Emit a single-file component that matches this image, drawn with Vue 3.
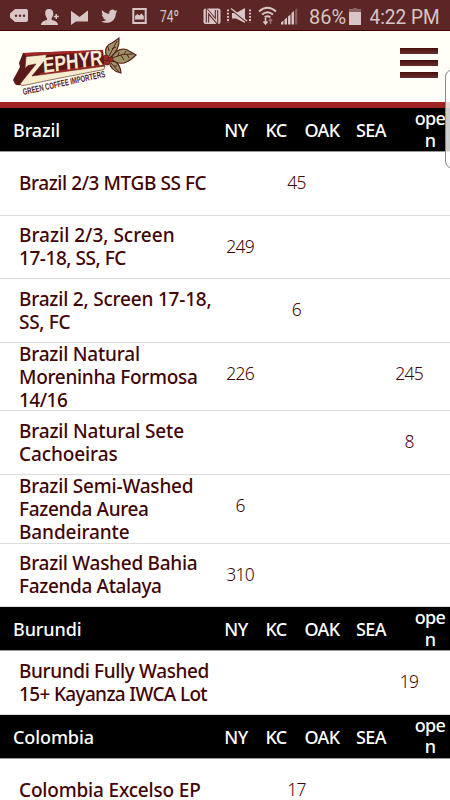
<template>
  <div class="screen">
    <div class="status">
      <!-- notification icons -->
      <svg class="status-icons" viewBox="0 0 225 30" width="225" height="30" fill="#d8c5c5">
        <path d="M15 9h11q2 0 2 2v9q0 2-2 2H15l-5-4.500v-4z" />
        <g fill="#5c2626">
          <circle cx="16" cy="15.700" r="1.200" /><circle cx="20" cy="15.700" r="1.200" /><circle cx="24" cy="15.700" r="1.200" />
        </g>
        <path d="M49 9c3 0 4.300 2 4.300 4.600 0 2-.8 3.400-1.700 4.600v1.600c3 1 6.400 2 6.400 5.200H41c0-3.200 3.200-4.200 6-5.200v-1.600c-1-1.200-1.800-2.600-1.800-4.600C45.200 11 46 9 49 9z" />
        <path d="M55.500 14v1.700h-1.700v1.500h1.700V19H57v-1.800h1.800v-1.500H57V14z" />
        <path d="M71 10l8.500 6L88 10v11.500H76L71 25z" />
        <path d="M71 10l8.500 6.200L88 9.500" fill="none" stroke="#5c2626" stroke-width="1.300" />
        <path d="M117.500 11.200c-.6.300-1.200.5-1.900.5.700-.4 1.200-1 1.400-1.800-.7.400-1.400.6-2.100.8a3.300 3.300 0 0 0-5.700 3c-2.800-.1-5.200-1.400-6.900-3.500-.9 1.500-.4 3.500 1 4.500-.5 0-1-.2-1.500-.4 0 1.600 1.200 3 2.700 3.300-.5.100-1 .1-1.500 0 .4 1.300 1.700 2.300 3.100 2.300a6.700 6.700 0 0 1-4.900 1.400c5.900 3.700 14.700.7 14.700-8.400.6-.4 1.200-1 1.600-1.700z" />
        <path d="M133.300 9h12.400v14h-12.400z" fill="none" stroke="#d8c5c5" stroke-width="2" />
        <path d="M135 19.500V16l2.500-2 1.800 1.500 2-2 2.500 2.500v3.500z" />
        <text x="160" y="22" textLength="19" lengthAdjust="spacingAndGlyphs">74º</text>
        <rect x="203.500" y="8.500" width="17" height="15.500" rx="2" />
        <path d="M207.500 22.500V11l9 10.500V10" fill="none" stroke="#5c2626" stroke-width="3.400" />
        <path d="M207.500 23V10.500l9 11V9" fill="none" stroke="#d8c5c5" stroke-width="1.300" />
      </svg>
      <!-- radio, battery and clock -->
      <svg class="status-icons" viewBox="225 0 225 30" width="225" height="30" fill="#d8c5c5">
        <path d="M232 13h4l9-5v15l-9-4.500h-4z" />
        <path d="M231 9.500l15 12" fill="none" stroke="#5c2626" stroke-width="1.600" />
        <path d="M231 8.500l16 12.500" fill="none" stroke="#d8c5c5" stroke-width="1.400" />
        <path d="M228 9.500v13M250 9.500v13" fill="none" stroke="#d8c5c5" stroke-width="2" stroke-dasharray="1.800 1.400" />
        <g fill="none" stroke="#d8c5c5" stroke-width="2">
          <path d="M259 11.500q8.500-7.500 17 0M262 14.500q5.500-4.500 11 0M264.700 17.200q2.800-2 5.600 0" />
          <path d="M265.500 18v6M263.500 21.500l2 2.500 2-2.500" stroke-width="1.600" />
          <path d="M270.500 24v-5M268.800 21l1.700-2 1.700 2" stroke-width="1.400" opacity=".5" />
        </g>
        <path d="M281 24.500v-2l2.500-2v4zM284.500 24.500v-5l2.500-2v7zM288 24.500v-8l2.500-2v10zM291.500 24.500V13l2.500-2v13.500z" />
        <path d="M295 24.500V10l2.300-2v16.500z" opacity=".35" />
        <text x="309" y="24" class="big" textLength="37" lengthAdjust="spacingAndGlyphs">86%</text>
        <path d="M349 9.500h4V8h4v1.500h4V25h-12z" />
        <path d="M349 9.500h4V8h4v1.500h4V12h-12z" fill="#8a6060" />
        <text x="369.500" y="24" class="big" textLength="70" lengthAdjust="spacingAndGlyphs">4:22 PM</text>
      </svg>
    </div>

    <header class="header">
      <svg class="logo" viewBox="0 31 145 71" width="145" height="71">
        <path d="M23 53l80-3 2 17-34 8-50 10q-4 1-6-1l-2-4 7-13-1-4z" fill="#5b1818" />
        <path d="M24 53l79-3v2l-77 4z" fill="#a32424" />
        <path d="M40 73l64-9v3l-68 13z" fill="#a32424" />
        <!-- the Z and the long tail under the name -->
        <path d="M26 56.500l20.500-2-1 5L32 76l73-10-1 3.500-54 10.500-24 5q-5 1.500-6-1l16-20-8 1.500-3 3z" fill="#f6ecce" stroke="#5b1818" stroke-width=".6" />
        <text class="brand" transform="translate(43.500 73) rotate(-8) skewX(-4)" textLength="60" lengthAdjust="spacingAndGlyphs">EPHYR</text>
        <text class="tagline" transform="translate(23.500 95) rotate(-12.500)" textLength="84" lengthAdjust="spacingAndGlyphs">GREEN COFFEE IMPORTERS</text>
        <g fill="#9a9468" stroke="#5b1f18" stroke-width="1.200">
          <path d="M107 57c-4-8 1-13 5-14l7-5q1 12-9 20z" />
          <path d="M111 58c5-9 13-11 18-7l7 4q-6 6-12 8c-6 1-10-1-13-5z" />
          <path d="M109 61c7-1 11 3 12 12-6-1-11-5-12-12z" />
          <path d="M109 56l8-15M112 58q10-5 21-4M111 63l8 9M109 51l-1-4M112 49l4-2M118 56l1-4M124 54l2-3M121 55l3 5M127 54l2 4M114 66h3" fill="none" stroke-width="1" />
        </g>
        <g fill="#9c2822" stroke="#571d14" stroke-width=".7">
          <circle cx="106" cy="58" r="3" /><circle cx="110.500" cy="59.500" r="2.600" /><circle cx="107" cy="62.500" r="2.600" />
        </g>
      </svg>
      <div class="menu">
        <span></span>
        <span></span>
        <span></span>
      </div>
    </header>

    <main>
      <section v-for="group in groups" :key="group.country">
        <div class="country">
          <h2>{{ group.country }}</h2>
          <span>NY</span>
          <span>KC</span>
          <span>OAK</span>
          <span>SEA</span>
          <span class="open">open</span>
        </div>
        <div
          v-for="(coffee, i) in group.coffees"
          :key="i"
          class="coffee"
          :class="{ tall: coffee.name.length === 3 }"
        >
          <p>
            <span v-for="[line, spacing] in coffee.name" :key="line" :style="{ letterSpacing: spacing + 'px' }">{{ line }}</span>
          </p>
          <b v-for="(bags, n) in coffee.bags" :key="n">{{ bags }}</b>
        </div>
      </section>
    </main>
    <div class="edge"></div>
  </div>
</template>

<script setup>
// name lines are [text, letter spacing], bags follow the four stock columns
const groups = [
  {
    country: 'Brazil',
    coffees: [
      { name: [['Brazil 2/3 MTGB SS FC', -0.42]], bags: ['', 45, '', ''] },
      { name: [['Brazil 2/3, Screen', 0], ['17-18, SS, FC', -0.45]], bags: [249, '', '', ''] },
      { name: [['Brazil 2, Screen 17-18,', -0.2], ['SS, FC', -0.3]], bags: ['', 6, '', ''] },
      { name: [['Brazil Natural', -0.2], ['Moreninha Formosa', -0.3], ['14/16', -0.5]], bags: [226, '', '', 245] },
      { name: [['Brazil Natural Sete', -0.17], ['Cachoeiras', -0.1]], bags: ['', '', '', 8] },
      { name: [['Brazil Semi-Washed', -0.2], ['Fazenda Aurea', -0.35], ['Bandeirante', -0.1]], bags: [6, '', '', ''] },
      { name: [['Brazil Washed Bahia', -0.27], ['Fazenda Atalaya', -0.35]], bags: [310, '', '', ''] },
    ],
  },
  {
    country: 'Burundi',
    coffees: [
      { name: [['Burundi Fully Washed', -0.37], ['15+ Kayanza IWCA Lot', -0.65]], bags: ['', '', '', 19] },
    ],
  },
  {
    country: 'Colombia',
    coffees: [
      { name: [['Colombia Excelso EP', -0.18]], bags: ['', 17, '', ''] },
    ],
  },
];
</script>

<style>
body {
  margin: 0;
  overflow: hidden;
}
</style>

<style scoped>
.screen {
  position: relative;
  width: 450px;
  height: 800px;
  overflow: hidden;
  background: #fff;
  color: #420505;
  font-family: "Noto Sans", "Liberation Sans", sans-serif;
}

.status {
  display: flex;
  height: 31px;
  box-sizing: border-box;
  border-bottom: 1px solid #420000;
  background: #5c2626;
}

.status-icons,
.logo {
  display: block;
}

.status text {
  font-family: Roboto, sans-serif;
  font-size: 17px;
}

.status .big {
  font-size: 20.5px;
}

.header {
  display: flex;
  justify-content: space-between;
  height: 77px;
  box-sizing: border-box;
  padding-right: 12px;
  border-bottom: 6px solid #a02323;
  background: #fffef7;
}

.brand {
  fill: #f7ecd0;
  font: bold 21.5px "Liberation Sans", sans-serif;
}

.tagline {
  fill: #5b1a1a;
  font: bold 9px "Liberation Sans", sans-serif;
}

.menu {
  display: flex;
  flex-direction: column;
  gap: 6px;
  padding-top: 17px;
}

.menu span {
  width: 38px;
  height: 6px;
  background: linear-gradient(#480e0e, #682d2d);
}

.country {
  display: grid;
  grid-template-columns: 203px 40px 40px 52px 46px 18px 36px;
  align-items: center;
  height: 44px;
  box-sizing: border-box;
  padding-left: 13px;
  border-bottom: 1px solid #999;
  background: #000;
  color: #fff;
  font-size: 18px;
  font-weight: 500;
  line-height: 21.5px;
  letter-spacing: -0.6px;
  text-align: center;
}

.country h2 {
  margin: 0;
  font-size: 18px;
  font-weight: 500;
  letter-spacing: -0.1px;
  text-align: left;
}

.country .open {
  grid-column: 7;
  padding-bottom: 2px;
  word-break: break-all;
}

.coffee {
  display: grid;
  grid-template-columns: 193px repeat(4, 56.300px);
  align-items: center;
  height: 63.700px;
  box-sizing: border-box;
  padding-left: 19px;
  border-bottom: 1px solid #ddd;
}

.coffee.tall {
  height: 68.400px;
}

.coffee p {
  margin: 0;
  font-size: 19px;
  font-weight: 500;
  line-height: 22.800px;
  white-space: nowrap;
}

.coffee.tall p {
  padding-bottom: 1px;
}

.coffee p span {
  display: block;
}

.coffee b {
  align-self: start;
  font-size: 17.5px;
  font-weight: 300;
  line-height: 61px;
  letter-spacing: -0.8px;
  text-align: center;
}

/* handle of the phone's edge panel */
.edge {
  position: absolute;
  top: 69px;
  left: 445px;
  width: 20px;
  height: 100px;
  box-sizing: border-box;
  border: 1px solid #888;
  border-radius: 8px;
  background: rgba(255, 255, 255, 0.8);
}
</style>
